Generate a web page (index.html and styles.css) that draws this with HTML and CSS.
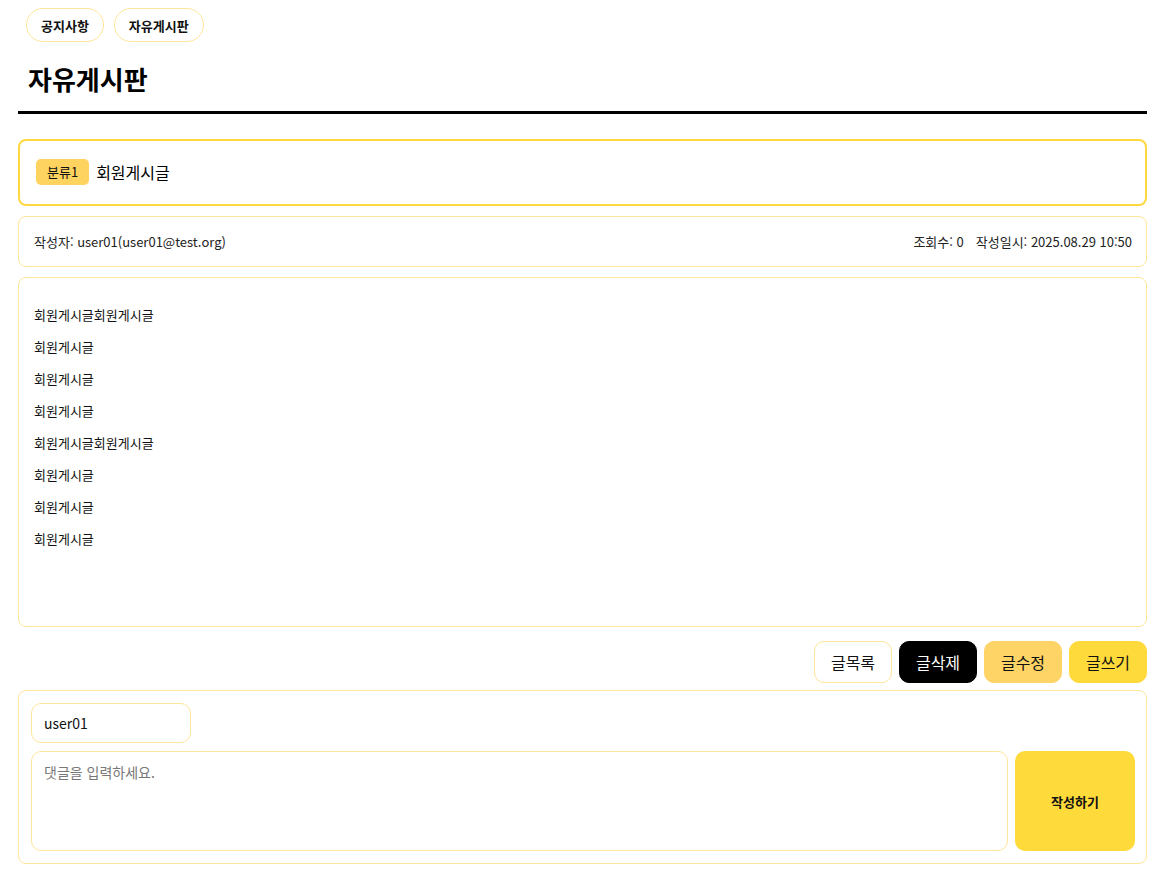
FILE: index.html
```html
<!DOCTYPE html>
<html lang="ko">
<head>
<meta charset="utf-8">
<title>자유게시판</title>
<link rel="stylesheet" href="styles.css">
</head>
<body>
<div class="page">
  <nav class="nav">
    <a class="pill">공지사항</a>
    <a class="pill">자유게시판</a>
  </nav>
  <h1 class="title">자유게시판</h1>
  <div class="rule"></div>

  <div class="subject">
    <span class="badge">분류1</span>
    <span class="subject-text">회원게시글</span>
  </div>

  <div class="info">
    <span>작성자: user01(user01@test.org)</span>
    <span class="info-right"><span>조회수: 0</span><span>작성일시: 2025.08.29 10:50</span></span>
  </div>

  <div class="content">
    <p>회원게시글회원게시글</p>
    <p>회원게시글</p>
    <p>회원게시글</p>
    <p>회원게시글</p>
    <p>회원게시글회원게시글</p>
    <p>회원게시글</p>
    <p>회원게시글</p>
    <p>회원게시글</p>
  </div>

  <div class="actions">
    <button class="btn btn-list">글목록</button>
    <button class="btn btn-delete">글삭제</button>
    <button class="btn btn-edit">글수정</button>
    <button class="btn btn-write">글쓰기</button>
  </div>

  <div class="comment">
    <div class="comment-user">user01</div>
    <div class="comment-row">
      <div class="comment-input">댓글을 입력하세요.</div>
      <button class="comment-submit">작성하기</button>
    </div>
  </div>
</div>
</body>
</html>
```

FILE: styles.css
```css
* { box-sizing: border-box; }
html, body { margin: 0; padding: 0; background: #fff; }
body {
  font-family: "Noto Sans CJK KR", "Noto Sans", sans-serif;
  color: #111;
}
.page {
  padding: 8px 28px 12px 18px;
}
.nav {
  display: flex;
  gap: 10px;
  padding-left: 8px;
}
.pill {
  display: inline-flex;
  align-items: center;
  height: 34px;
  padding: 0 14px;
  border: 1px solid #ffe69a;
  border-radius: 17px;
  font-size: 13px;
  font-weight: 700;
  color: #111;
}
.title {
  margin: 0;
  padding: 19px 0 0 10px;
  height: 66px;
  font-size: 26px;
  font-weight: 700;
  line-height: 36px;
  color: #000;
}
.rule {
  height: 3px;
  background: #000;
  margin-top: 3px;
}
.subject {
  margin-top: 25px;
  height: 67px;
  border: 2px solid #ffd83f;
  border-radius: 8px;
  display: flex;
  align-items: center;
  padding-left: 16px;
  padding-bottom: 2px;
  gap: 7px;
}
.badge {
  display: inline-flex;
  align-items: center;
  height: 26px;
  padding: 0 11px;
  background: #ffd35f;
  border-radius: 5px;
  font-size: 13px;
  color: #111;
}
.subject-text {
  font-size: 16px;
  color: #000;
}
.info {
  margin-top: 10px;
  height: 51px;
  border: 1px solid #ffe69a;
  border-radius: 8px;
  display: flex;
  align-items: center;
  justify-content: space-between;
  padding: 0 14px 0 15px;
  font-size: 13px;
  color: #222;
}
.info-right {
  display: flex;
  gap: 12px;
}
.content {
  margin-top: 10px;
  height: 350px;
  border: 1px solid #ffe69a;
  border-radius: 8px;
  padding: 21px 15px 0;
  font-size: 13px;
  color: #111;
}
.content p {
  margin: 0;
  line-height: 32px;
}
.actions {
  margin-top: 14px;
  display: flex;
  justify-content: flex-end;
  gap: 7px;
}
.btn {
  width: 78px;
  height: 42px;
  border-radius: 10px;
  border: 1px solid transparent;
  font-family: inherit;
  font-size: 16px;
  color: #111;
  padding: 0;
}
.btn-list { background: #fff; border-color: #ffe69a; }
.btn-delete { background: #000; color: #fff; border-color: #000; }
.btn-edit { background: #ffd466; border-color: #ffd466; }
.btn-write { background: #ffda3b; border-color: #ffda3b; }
.comment {
  margin-top: 7px;
  border: 1px solid #ffe69a;
  border-radius: 8px;
  padding: 12px 11px 12px 12px;
}
.comment-user {
  width: 160px;
  height: 40px;
  border: 1px solid #ffe69a;
  border-radius: 10px;
  display: flex;
  align-items: center;
  padding-left: 12px;
  font-size: 14px;
  color: #111;
}
.comment-row {
  margin-top: 8px;
  display: flex;
  gap: 7px;
}
.comment-input {
  flex: 1;
  height: 100px;
  border: 1px solid #ffe69a;
  border-radius: 10px;
  padding: 10px 12px;
  font-size: 14px;
  color: #777;
}
.comment-submit {
  width: 120px;
  height: 100px;
  border: none;
  border-radius: 10px;
  background: #ffda3b;
  font-family: inherit;
  font-size: 13px;
  font-weight: 700;
  color: #111;
}
```
